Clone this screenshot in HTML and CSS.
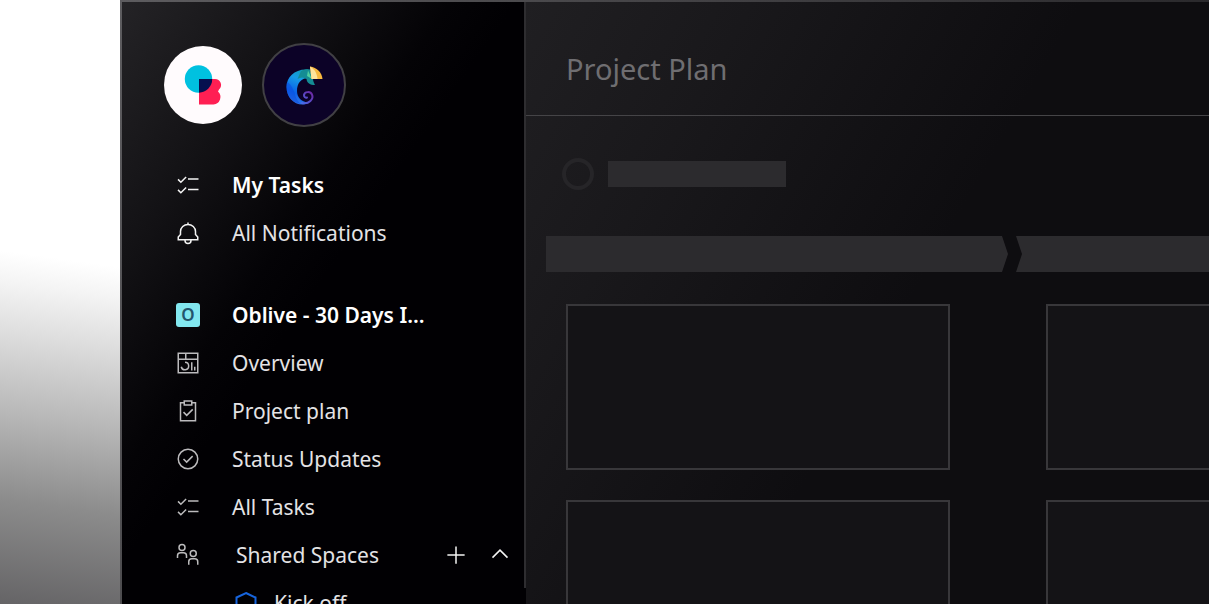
FILE: index.html
```html
<!DOCTYPE html>
<html lang="en">
<head>
    <meta charset="UTF-8">
    <meta name="viewport" content="width=device-width, initial-scale=1.0">
    <title>Project Plan</title>
    <link rel="stylesheet" href="styles.css">
</head>
<body>
    <!-- Shared icons -->
    <svg class="sprite" aria-hidden="true">
        <symbol id="icon-tasks" viewBox="0 0 32 32">
            <path d="M16 8h14M16 22h14M2.700 8.500l3.800 3.800 7-7M2.700 22.500l3.800 3.800 7-7"/>
        </symbol>
        <symbol id="icon-bell" viewBox="0 0 32 32">
            <path d="M16 2v3M3 25v-3.500l3-3.500v-4a10 9.500 0 0 1 20 0v4l3 3.500V25zM12 25v1a4 4 0 0 0 8 0v-1"/>
        </symbol>
        <symbol id="icon-overview" viewBox="0 0 32 32">
            <path d="M3 3h26v26H3zM3 11h26M13 3v8M12 15a5 5 0 1 1-5 6M21 15v11M25 21v5"/>
        </symbol>
        <symbol id="icon-plan" viewBox="0 0 32 32">
            <path d="M11 5H6v24h20V5h-5M11 2.500h10V8H11zM10 17.500l4.300 4.300 8-8"/>
        </symbol>
        <symbol id="icon-status" viewBox="0 0 32 32">
            <circle cx="16" cy="16" r="13"/>
            <path d="M10 16l4.200 4.200 8-8"/>
        </symbol>
        <symbol id="icon-people" viewBox="0 0 32 32">
            <circle cx="8" cy="6" r="4"/>
            <circle cx="23" cy="14" r="4"/>
            <path d="M2 20v-3a4 4 0 0 1 4-4h4a4 4 0 0 1 4 4v3M17 29v-4a4 4 0 0 1 4-4h4a4 4 0 0 1 4 4v4"/>
        </symbol>
    </svg>

    <div class="backdrop"></div>
    <div class="window">
        <aside class="sidebar">
            <div class="workspaces">
                <a href="#" class="workspace workspace-light" aria-label="Oblive">
                    <svg viewBox="0 0 78 78" aria-hidden="true">
                        <circle cx="34.500" cy="33" r="13.700" fill="#00c1e0"/>
                        <path fill="#ff1f53" d="M35 33h16a6 6 0 0 1 4 10.500l-1 2a7.500 7.500 0 0 1-4.500 13H35z"/>
                        <path fill="#06104f" d="M35 33h13.200a13.700 13.700 0 0 1-13.200 13.700z"/>
                    </svg>
                </a>
                <a href="#" class="workspace workspace-dark" aria-label="Chameleon">
                    <svg viewBox="0 0 78 78" aria-hidden="true">
                        <defs>
                            <linearGradient id="body" x1="0.700" y1="0" x2="0.400" y2="1">
                                <stop offset="0" stop-color="#12a0b8"/>
                                <stop offset="0.300" stop-color="#169be6"/>
                                <stop offset="0.700" stop-color="#0a62ea"/>
                                <stop offset="1" stop-color="#3c7be8"/>
                            </linearGradient>
                            <linearGradient id="tail" x1="0" y1="1" x2="1" y2="0">
                                <stop offset="0" stop-color="#4a6ae8"/>
                                <stop offset="1" stop-color="#6e249f"/>
                            </linearGradient>
                        </defs>
                        <path fill="url(#body)" d="M43 23.500C30 22.500 21.500 31 21.500 41c0 10 7 17.500 16 17.500 3 0 5-1 7-2.500-7 1-12.500-4-12.500-11 0-8 4-12.500 11-13z"/>
                        <path fill="#0a4fe0" d="M22.500 36c4 3 7 9 8 14 1 3 3 6 5 8-8-1-14-8-14-17 0-2 0-3 1-5z" opacity="0.600"/>
                        <path fill="none" stroke="url(#tail)" stroke-width="2" stroke-linecap="round" d="M37 57c7 1.500 12-4 10-8.500-1.500-3.500-7.500-3-8 .500 0 2 1.500 3 3 2.500"/>
                        <path fill="#148c94" d="M36 25c3-1.500 6-2 9-1.500l3 9.500c0 2 1 4 2 6-5 0-8-2-8.500-6-3-2-6-2-9 0z"/>
                        <path fill="#4fcf9f" d="M43 24.500l4 8.500-5-3z"/>
                        <path fill="#f8b83f" d="M45 20.500c7 1 12 6 12.500 12.500h-11z"/>
                        <path fill="#ffe39c" d="M45 20.500c5 3 7 7 7.500 12.500h-6z"/>
                    </svg>
                </a>
            </div>

            <nav class="nav" aria-label="Personal">
                <a href="#" class="nav-item nav-item-strong">
                    <svg class="icon icon-bright"><use href="#icon-tasks"/></svg>
                    <span>My Tasks</span>
                </a>
                <a href="#" class="nav-item">
                    <svg class="icon icon-bright"><use href="#icon-bell"/></svg>
                    <span>All Notifications</span>
                </a>
            </nav>

            <nav class="nav" aria-label="Project">
                <a href="#" class="nav-item nav-item-strong">
                    <span class="project-badge">O</span>
                    <span>Oblive - 30 Days I...</span>
                </a>
                <a href="#" class="nav-item">
                    <svg class="icon"><use href="#icon-overview"/></svg>
                    <span>Overview</span>
                </a>
                <a href="#" class="nav-item">
                    <svg class="icon"><use href="#icon-plan"/></svg>
                    <span>Project plan</span>
                </a>
                <a href="#" class="nav-item">
                    <svg class="icon"><use href="#icon-status"/></svg>
                    <span>Status Updates</span>
                </a>
                <a href="#" class="nav-item">
                    <svg class="icon"><use href="#icon-tasks"/></svg>
                    <span>All Tasks</span>
                </a>
                <div class="nav-row">
                    <a href="#" class="nav-item nav-spaces">
                        <svg class="icon"><use href="#icon-people"/></svg>
                        <span>Shared Spaces</span>
                    </a>
                    <button type="button" class="icon-button" aria-label="Add space">
                        <svg class="icon icon-bright" viewBox="0 0 32 32"><path d="M16 4.500v23M4.500 16h23"/></svg>
                    </button>
                    <button type="button" class="icon-button" aria-label="Collapse spaces">
                        <svg class="icon icon-bright" viewBox="0 0 32 32"><path d="M6 19.500l10-10 10 10"/></svg>
                    </button>
                </div>
                <a href="#" class="nav-item nav-child">
                    <svg class="icon icon-space" viewBox="0 0 24 24"><path d="M12 2l9.500 4.500v11L12 22l-9.500-4.500v-11z"/></svg>
                    <span>Kick off</span>
                </a>
            </nav>
        </aside>

        <main class="main">
            <header class="main-header">
                <h1>Project Plan</h1>
            </header>
            <div class="summary">
                <span class="summary-ring"></span>
                <span class="summary-bar"></span>
            </div>
            <div class="stages">
                <div class="stage"></div>
                <div class="stage stage-next"></div>
            </div>
            <div class="board">
                <div class="column">
                    <div class="card"></div>
                    <div class="card"></div>
                </div>
                <div class="column">
                    <div class="card"></div>
                    <div class="card"></div>
                </div>
            </div>
        </main>
    </div>
</body>
</html>
```
FILE: styles.css
```css
* {
    margin: 0;
    padding: 0;
    box-sizing: border-box;
}
body {
    font-family: 'Noto Sans', 'Open Sans', sans-serif;
    font-size: 21px;
    background-color: #ffffff;
    color: #e4e3e5;
    display: flex;
    height: 100vh;
    overflow: hidden;
}
a {
    color: inherit;
    text-decoration: none;
}
.sprite {
    position: absolute;
    width: 0;
    height: 0;
}
.backdrop {
    flex: 0 0 120px;
    background: linear-gradient(188deg, #ffffff 43%, #f4f4f4 48%, #dedede 56%, #b8b8b8 69%, #8c8c8c 83%, #656466 100%);
}
.window {
    flex: 1;
    min-width: 0;
    display: flex;
    border: 2px solid #454447;
    border-width: 2px 0 0 2px;
    border-image: linear-gradient(120deg, #5d5c5f 0%, #39383b 55%, #19181b 100%) 2;
    overflow: hidden;
}

/* Sidebar */
.sidebar {
    flex: 0 0 404px;
    padding-top: 41px;
    background: linear-gradient(125deg, #242326 0%, #131215 22%, #040306 40%, #010003 48%);
    border-right: 2px solid #2e2d30;
    border-image: linear-gradient(#2e2d30 97%, #010003 97%) 2;
}
.workspaces {
    display: flex;
    align-items: center;
    gap: 20px;
    padding-left: 42px;
    margin-bottom: 34px;
}
.workspace {
    border-radius: 50%;
}
.workspace svg {
    display: block;
    width: 78px;
    height: 78px;
}
.workspace-light {
    background-color: #fffbfd;
}
.workspace-dark {
    padding: 1px;
    background-color: #0c0227;
    border: 2px solid #414044;
}
.nav {
    margin-bottom: 34px;
}
.nav-item {
    display: flex;
    align-items: center;
    gap: 32px;
    height: 48px;
    padding-left: 54px;
    white-space: nowrap;
}
.nav-item-strong {
    font-weight: 600;
    color: #ffffff;
}
.icon {
    display: block;
    flex: none;
    width: 24px;
    height: 24px;
    fill: none;
    stroke: #bcbbbd;
    stroke-width: 2;
}
.icon-bright {
    stroke: #f4f4f4;
}
.project-badge {
    width: 24px;
    height: 24px;
    border-radius: 3px;
    background-color: #82e7ef;
    color: #24556c;
    font-size: 17px;
    line-height: 24px;
    text-align: center;
}
.nav-row {
    display: flex;
    align-items: center;
    gap: 20px;
    padding-right: 12px;
}
.nav-spaces {
    flex: 1;
    gap: 36px;
}
.icon-button {
    background: none;
    border: none;
    cursor: pointer;
}
.nav-child {
    gap: 16px;
    padding-left: 112px;
}
.icon-space {
    stroke: #1764dd;
}

/* Main area */
.main {
    flex: 1;
    min-width: 0;
    overflow: hidden;
    background: linear-gradient(120deg, #201f22 0%, #19181b 22%, #121114 42%, #0e0d10 54%);
}
.main-header {
    display: flex;
    align-items: center;
    height: 114px;
    padding: 20px 40px 0;
    border-bottom: 1px solid #454447;
}
h1 {
    font-size: 29px;
    font-weight: 400;
    color: #6f6e71;
}
.summary {
    display: flex;
    align-items: center;
    gap: 14px;
    padding: 42px 36px 46px;
}
.summary-ring {
    width: 32px;
    height: 32px;
    border: 4px solid #262528;
    border-radius: 50%;
}
.summary-bar {
    width: 178px;
    height: 26px;
    background-color: #2c2b2e;
}
.stages {
    display: flex;
    gap: 8px;
    padding-left: 20px;
    margin-bottom: 32px;
}
.stage {
    flex: none;
    width: 462px;
    height: 36px;
    background-color: #2c2b2e;
    clip-path: polygon(0 0, calc(100% - 6px) 0, 100% 50%, calc(100% - 6px) 100%, 0 100%);
}
.stage-next {
    clip-path: polygon(0 0, calc(100% - 6px) 0, 100% 50%, calc(100% - 6px) 100%, 0 100%, 6px 50%);
}
.board {
    display: flex;
    gap: 96px;
    padding-left: 40px;
}
.column {
    display: flex;
    flex: none;
    flex-direction: column;
    gap: 30px;
    width: 384px;
}
.card {
    height: 166px;
    background-color: #141316;
    border: 2px solid #38373a;
}
```
